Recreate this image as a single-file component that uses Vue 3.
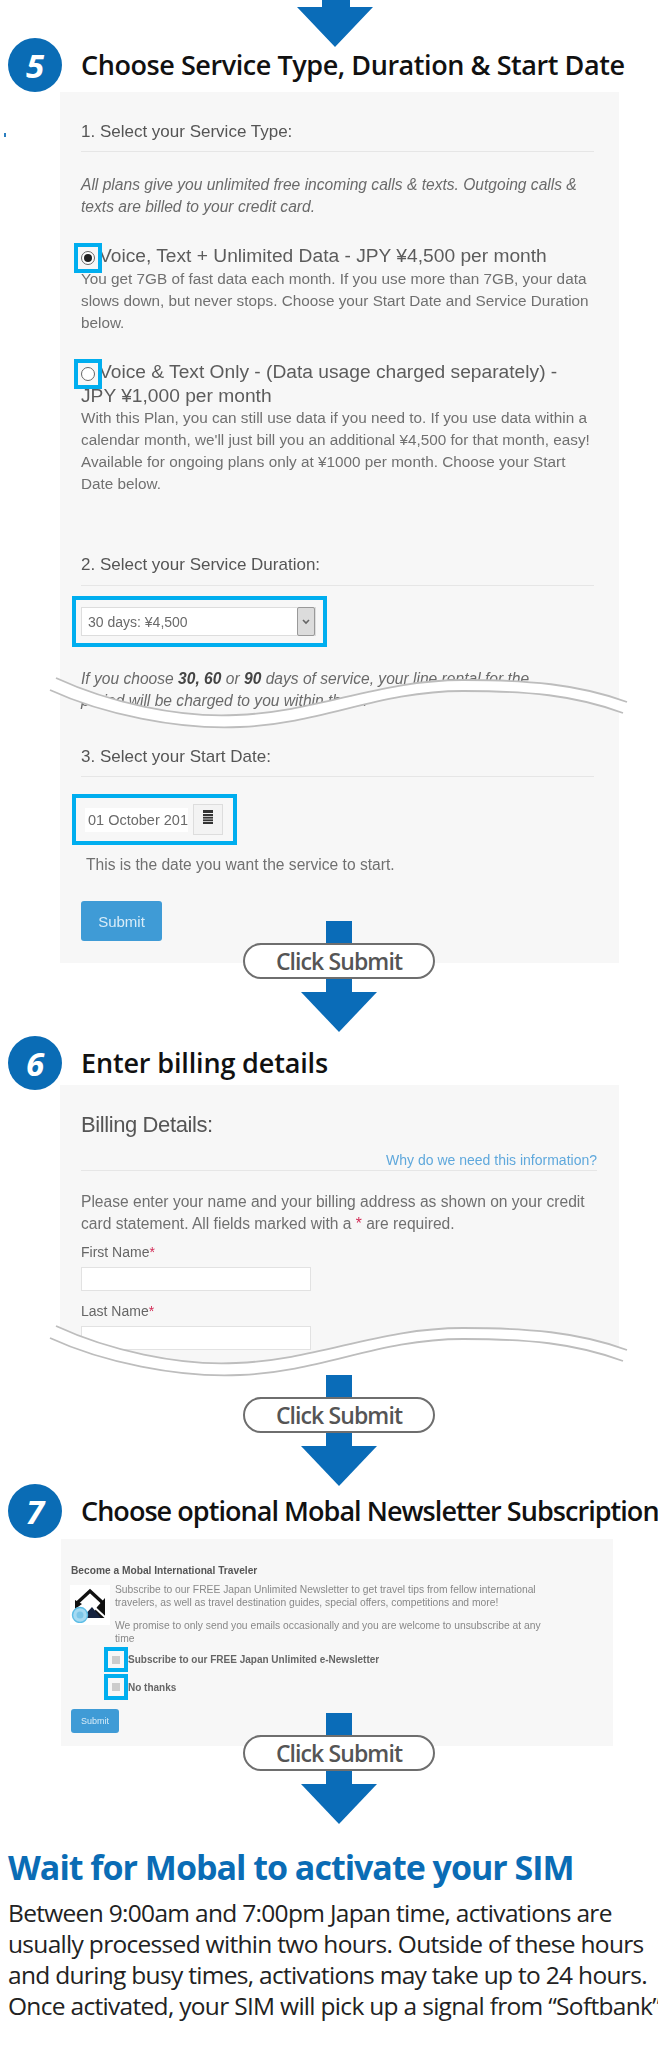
<script setup>
const newsletterLines = [
  'Subscribe to our FREE Japan Unlimited Newsletter to get travel tips from fellow international',
  'travelers, as well as travel destination guides, special offers, competitions and more!',
]
const waveTop = 'M8 6C60 30 130 46 188 43C270 40 330 8 415 8C480 8 530 12 579 30'
const waveBottom = 'M2 18C54 42 130 58 192 55C274 52 330 19 415 19C480 19 526 23 575 41'
const waveBand = waveTop + 'L575 41C526 23 480 19 415 19C330 19 274 52 192 55C130 58 54 42 2 18Z'
const waveCut = waveTop + 'L590 34L590 60L0 60L0 14Z'
</script>

<template>
  <div class="page">
    <svg class="arrow-top" width="76" height="47" viewBox="0 0 76 47"><path d="M25 0H53V7H76L38 47L0 7H25Z" fill="#0a6cb8"/></svg>
    <i class="speck"></i>

    <div class="step step-5">
      <span class="badge">5</span>
      <h2 class="step-title t5">Choose Service Type, Duration &amp; Start Date</h2>
    </div>
    <section class="panel panel-5">
      <h3 class="sub sub-1">1. Select your Service Type:</h3>
      <p class="body italic intro">All plans give you unlimited free incoming calls &amp; texts. Outgoing calls &amp; texts are billed to your credit card.</p>

      <div class="option">
        <span class="mark"><span class="radio on"></span></span>
        <h4 class="opt-title">Voice, Text + Unlimited Data - JPY ¥4,500 per month</h4>
        <p class="body">You get 7GB of fast data each month. If you use more than 7GB, your data slows down, but never stops. Choose your Start Date and Service Duration below.</p>
      </div>
      <div class="option">
        <span class="mark"><span class="radio"></span></span>
        <h4 class="opt-title">Voice &amp; Text Only - (Data usage charged separately) - JPY ¥1,000 per month</h4>
        <p class="body tight">With this Plan, you can still use data if you need to. If you use data within a calendar month, we'll just bill you an additional ¥4,500 for that month, easy! Available for ongoing plans only at ¥1000 per month. Choose your Start Date below.</p>
      </div>

      <h3 class="sub sub-2">2. Select your Service Duration:</h3>
      <div class="hl hl-select">
        <div class="select">
          <span>30 days: ¥4,500</span>
          <span class="select-btn"><svg width="10" height="7" viewBox="0 0 10 7"><path d="M2 2L5 5L8 2" fill="none" stroke="#666" stroke-width="1.6"/></svg></span>
        </div>
      </div>
      <p class="body italic note">If you choose <b>30, 60</b> or <b>90</b> days of service, your line rental for the<br>period will be charged to you within the m</p>

      <h3 class="sub sub-3">3. Select your Start Date:</h3>
      <div class="hl hl-date">
        <span class="date-input">01 October 2018</span>
        <span class="date-btn"><svg width="12" height="14" viewBox="0 0 12 14"><path d="M1 0H11V3H1ZM1 4H11V14H1Z" fill="#333"/><path d="M1 6.5H11M1 9H11M1 11.5H11" stroke="#eee" stroke-width=".8"/></svg></span>
      </div>
      <p class="body hint">This is the date you want the service to start.</p>
      <span class="btn">Submit</span>

      <svg class="wave wave-5" width="590" height="60" viewBox="0 0 590 60">
        <path :d="waveBand" fill="#fff"/>
        <path :d="waveTop" class="wave-line"/>
        <path :d="waveBottom" class="wave-line"/>
      </svg>
    </section>

    <div class="connector c-5">
      <i class="stem"></i>
      <span class="pill">Click Submit</span>
      <i class="stem short"></i>
      <i class="tri"></i>
    </div>

    <div class="step step-6">
      <span class="badge">6</span>
      <h2 class="step-title t6">Enter billing details</h2>
    </div>
    <section class="panel panel-6">
      <h3 class="billing">Billing Details:</h3>
      <div class="why"><a>Why do we need this information?</a></div>
      <p class="body please">Please enter your name and your billing address as shown on your credit card statement. All fields marked with a <em>*</em> are required.</p>
      <label class="field-label first">First Name<em>*</em></label>
      <div class="input"></div>
      <label class="field-label last">Last Name<em>*</em></label>
      <div class="input"></div>

      <svg class="wave wave-6" width="590" height="60" viewBox="0 0 590 60">
        <path :d="waveCut" fill="#fff"/>
        <path :d="waveTop" class="wave-line"/>
        <path :d="waveBottom" class="wave-line"/>
      </svg>
    </section>

    <div class="connector c-6">
      <i class="stem"></i>
      <span class="pill">Click Submit</span>
      <i class="stem short"></i>
      <i class="tri"></i>
    </div>

    <div class="step step-7">
      <span class="badge">7</span>
      <h2 class="step-title t7">Choose optional Mobal Newsletter Subscription</h2>
    </div>
    <section class="panel panel-7">
      <h5 class="nl-title">Become a Mobal International Traveler</h5>
      <div class="nl-row">
        <div class="nl-icon">
          <svg width="40" height="38" viewBox="0 0 40 38">
            <path d="M6 19L20 6L34 19" fill="none" stroke="#111" stroke-width="3.4"/>
            <path d="M5 24L12 19L5 15ZM35 13V33L21 33L27 22Z" fill="#111"/>
            <path d="M12 33L22 22L31 33Z" fill="#16233f"/>
            <path d="M22 20L36 33" stroke="#fff" stroke-width="2"/>
            <circle cx="10" cy="30" r="7.5" fill="#a5daf2" stroke="#5dbde6" stroke-width="1.4"/>
            <circle cx="10" cy="30" r="3.5" fill="#7cc6e8"/>
          </svg>
        </div>
        <div class="nl-copy">
          <p><template v-for="l in newsletterLines" :key="l">{{ l }}<br></template></p>
          <p>We promise to only send you emails occasionally and you are welcome to unsubscribe at any<br>time</p>
        </div>
      </div>
      <div class="nl-check"><span class="mark-sq"><i></i></span><b>Subscribe to our FREE Japan Unlimited e-Newsletter</b></div>
      <div class="nl-check second"><span class="mark-sq"><i></i></span><b>No thanks</b></div>
      <span class="btn small">Submit</span>
    </section>

    <div class="connector c-7">
      <i class="stem"></i>
      <span class="pill">Click Submit</span>
      <i class="stem short"></i>
      <i class="tri"></i>
    </div>

    <h1 class="wait">Wait for Mobal to activate your SIM</h1>
    <p class="lead">Between 9:00am and 7:00pm Japan time, activations are<br>usually processed within two hours. Outside of these hours<br>and during busy times, activations may take up to 24 hours.<br>Once activated, your SIM will pick up a signal from “Softbank”</p>
  </div>
</template>

<style>
html, body { margin: 0; background: #fff; }
</style>

<style scoped>
.page {
  position: relative;
  width: 658px;
  height: 2048px;
  overflow: hidden;
  background: #fff;
  font-family: "Liberation Sans", Arial, sans-serif;
  color: #666;
}
h1, h2, h3, h4, h5, p { margin: 0; font-weight: 400; }
.arrow-top { display: block; margin-left: 297px; }
.speck { position: absolute; left: 4px; top: 133px; width: 2px; height: 4px; background: #2b7fc0; }

.step { display: flex; align-items: center; gap: 19px; height: 54px; margin-left: 8px; }
.step-5 { margin-top: -9px; }
.step-6 { margin-top: 4px; position: relative; z-index: 1; }
.step-7 { margin-top: -2px; position: relative; z-index: 2; }
.badge {
  flex: none; width: 54px; height: 54px; border-radius: 50%;
  background: #0a6cb5; color: #fff;
  display: flex; align-items: center; justify-content: center;
  font: italic 700 33px/1 "Open Sans", sans-serif;
}
.step-title {
  font: 600 27px/34px "Open Sans", sans-serif;
  color: #111;
  white-space: nowrap;
}
.t5 { letter-spacing: -.43px; }
.t6 { letter-spacing: -.15px; }
.t7 { letter-spacing: -.95px; }

.panel { position: relative; margin-left: 60px; width: 559px; box-sizing: border-box; background: #f7f7f7; filter: blur(.35px); }
.panel-5 { padding: 28px 25px 22px 21px; }
.sub { font-size: 17px; line-height: 24px; color: #555; padding-bottom: 7px; border-bottom: 1px solid #e6e6e6; }
.sub-2 { margin-top: 58px; padding-bottom: 8px; }
.sub-3 { margin-top: 33px; }
.body { font-size: 15.3px; line-height: 22px; color: #707070; }
.italic { font-style: italic; color: #6a6a6a; font-size: 15.6px; }
.italic b { color: #444; }
.intro { margin-top: 22px; }
.option { position: relative; margin-top: 26px; }
.opt-title { font-size: 19.2px; line-height: 24px; color: #5c5c5c; text-indent: 18px; }
.tight { margin-top: -1px; }
.mark {
  position: absolute; left: -7px; top: -1px; z-index: 1;
  width: 28px; height: 30px; box-sizing: border-box;
  border: 4px solid #00aeef;
  display: flex; align-items: center; justify-content: center;
}
.radio { width: 14px; height: 14px; box-sizing: border-box; border-radius: 50%; border: 1.5px solid #666; background: #fff; position: relative; }
.radio.on::after { content: ""; position: absolute; inset: 2px; border-radius: 50%; background: #222; }

.hl { box-sizing: border-box; border: 4px solid #00aeef; margin-left: -9px; }
.hl-select { width: 255px; height: 51px; margin-top: 10px; padding: 7px 7px 7px 5px; }
.select {
  height: 29px; box-sizing: border-box; background: #fff; border: 1px solid #ddd; display: flex; align-items: center; justify-content: space-between;
  padding-left: 6px; font-size: 14px; color: #6a6a6a;
}
.select-btn { width: 18px; height: 29px; box-sizing: border-box; background: #dcdcdc; border: 1px solid #999; border-radius: 2px; display: flex; align-items: center; justify-content: center; }
.note { margin-top: 21px; }
.hl-date { width: 165px; height: 51px; margin-top: 17px; padding: 6px 0 0 9px; display: flex; gap: 3px; align-items: flex-start; }
.date-input {
  width: 103px; height: 24px; margin-top: 4px; box-sizing: border-box; background: #fff; padding-left: 3px;
  font-size: 14.5px; line-height: 24px; color: #6a6a6a; white-space: nowrap; overflow: hidden;
}
.date-btn { width: 30px; height: 31px; box-sizing: border-box; border: 1px solid #ddd; background: #f3f3f3; display: flex; justify-content: center; padding-top: 5px; margin-left: 2px; }
.hint { margin: 9px 0 0 5px; font-size: 15.6px; }
.btn {
  display: flex; align-items: center; justify-content: center;
  width: 81px; height: 40px; margin-top: 25px; border-radius: 3px;
  background: #3f9bd6; color: #d8ecf8; font-size: 15px;
}
.wave { position: absolute; left: -12px; display: block; pointer-events: none; z-index: 2; }
.wave-5 { top: 580px; }
.wave-6 { top: 235px; }
.wave-line { fill: none; stroke: #bdbdbd; stroke-width: 1.8; }

.connector { position: relative; z-index: 3; width: 192px; margin-left: 243px; display: flex; flex-direction: column; align-items: center; }
.c-5 { margin-top: -42px; }
.c-7 { margin-top: -33px; }
.stem { display: block; width: 26px; height: 22px; background: #0a6cb8; }
.stem.short { height: 13px; }
.tri { display: block; width: 0; height: 0; border-left: 38px solid transparent; border-right: 38px solid transparent; border-top: 40px solid #0a6cb8; }
.pill {
  box-sizing: border-box; width: 192px; height: 36px; border: 2.5px solid #6e6e6e; border-radius: 18px; background: #fff;
  display: flex; align-items: center; justify-content: center;
  font: 600 23px/1 "Open Sans", sans-serif; letter-spacing: -.9px; color: #555;
}

.panel-6 { margin-top: -5px; padding: 25px 25px 25px 21px; }
.billing { font-size: 22px; line-height: 30px; color: #555; letter-spacing: -.4px; }
.why { margin-top: 11px; height: 19px; border-bottom: 1px solid #e6e6e6; text-align: right; font-size: 14px; line-height: 19px; margin-right: -3px; color: #5fa8dc; }
.please { margin-top: 20px; font-size: 15.6px; }
em { color: #d22a55; font-style: normal; }
.field-label { display: block; font-size: 14px; line-height: 18px; color: #666; }
.first { margin-top: 8px; }
.last { margin-top: 11px; }
.input { width: 230px; height: 24px; margin-top: 6px; box-sizing: border-box; background: #fff; border: 1px solid #e2e2e2; }

.panel-7 { width: 552px; margin-left: 61px; margin-top: 1px; padding: 25px 10px 13px 10px; filter: blur(.55px); }
.nl-title { font-size: 10.2px; line-height: 14px; font-weight: 700; color: #555; }
.nl-row { display: flex; gap: 5px; margin-top: 5px; }
.nl-icon { flex: none; width: 40px; height: 40px; background: #fff; margin-top: 2px; margin-left: -1px; }
.nl-copy { font-size: 10.3px; line-height: 13px; color: #888; width: 440px; }
.nl-copy p + p { margin-top: 10px; }
.nl-check { display: flex; align-items: center; height: 25px; margin-left: 33px; margin-top: 2px; font-size: 10px; color: #666; white-space: nowrap; }
.nl-check.second { height: 26px; }
.mark-sq { flex: none; width: 24px; height: 100%; box-sizing: border-box; border: 4px solid #00aeef; background: #f7f7f7; display: flex; align-items: center; justify-content: center; }
.mark-sq i { width: 8px; height: 8px; background: #ccc; }
.btn.small { width: 48px; height: 24px; margin-top: 9px; font-size: 9px; }

.wait {
  margin: 21px 0 0 8px;
  font: 700 34px/44px "Open Sans", sans-serif;
  color: #0a6cb5;
  letter-spacing: -1px;
  white-space: nowrap;
}
.lead {
  margin: 8px 0 0 8px;
  font: 400 24.5px/31px "Open Sans", sans-serif;
  color: #222;
  letter-spacing: -.69px;
  white-space: nowrap;
}
</style>
